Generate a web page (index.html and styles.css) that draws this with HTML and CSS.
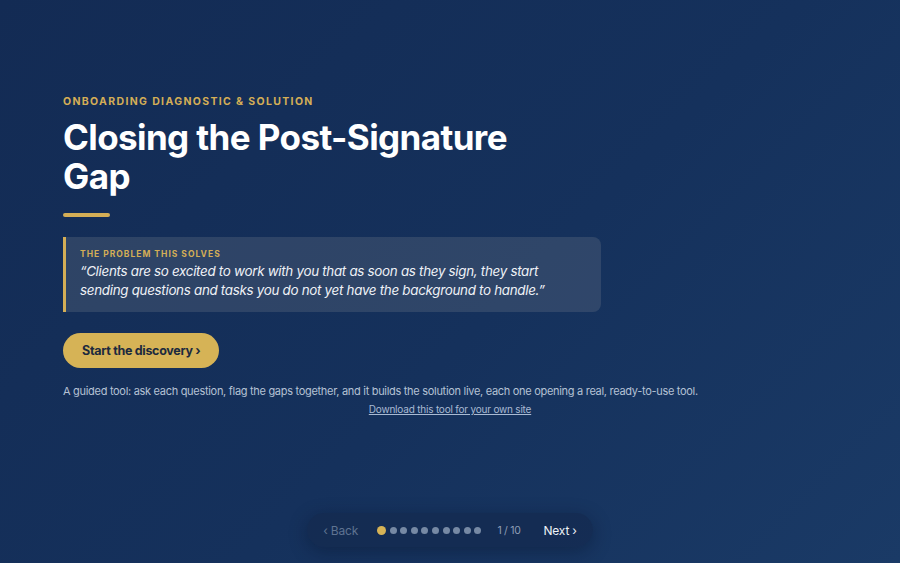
FILE: index.html
```html
<!DOCTYPE html>
<html lang="en">
<head>
<meta charset="utf-8">
<title>Closing the Post-Signature Gap</title>
<link rel="stylesheet" href="styles.css">
</head>
<body>
<main class="page">
  <section class="intro">
    <div class="eyebrow">ONBOARDING DIAGNOSTIC &amp; SOLUTION</div>
    <h1 class="title">Closing the Post-Signature Gap</h1>
    <div class="rule"></div>
    <div class="problem">
      <div class="problem-label">THE PROBLEM THIS SOLVES</div>
      <p class="problem-quote">“Clients are so excited to work with you that as soon as they sign, they start sending questions and tasks you do not yet have the background to handle.”</p>
    </div>
    <button class="start">Start the discovery ›</button>
    <p class="desc">A guided tool: ask each question, flag the gaps together, and it builds the solution live, each one opening a real, ready-to-use tool.</p>
    <div class="download"><a href="#">Download this tool for your own site</a></div>
  </section>
  <nav class="pager">
    <span class="back">‹ Back</span>
    <span class="dots">
      <i class="dot active"></i><i class="dot"></i><i class="dot"></i><i class="dot"></i><i class="dot"></i><i class="dot"></i><i class="dot"></i><i class="dot"></i><i class="dot"></i><i class="dot"></i>
    </span>
    <span class="count">1 / 10</span>
    <span class="next">Next ›</span>
  </nav>
</main>
</body>
</html>
```

FILE: styles.css
```css
* { box-sizing: border-box; }
html, body { margin: 0; height: 100%; }
body {
  background: linear-gradient(135deg, #132b54 0%, #15315c 55%, #1a3a66 100%);
  font-family: "Inter", "DejaVu Sans", sans-serif;
  color: #fff;
  overflow: hidden;
}
.page {
  height: 563px;
  display: flex;
  flex-direction: column;
  padding: 95px 63px 0 63px;
}
.intro { display: flex; flex-direction: column; align-items: flex-start; }
.eyebrow {
  color: #d4ae56;
  font-size: 10.5px;
  font-weight: 700;
  letter-spacing: 1.35px;
  line-height: 14px;
}
.title {
  margin: 9px 0 0 0;
  font-size: 35px;
  font-weight: 700;
  line-height: 39px;
  letter-spacing: -0.6px;
  width: 480px;
}
.rule {
  margin-top: 17px;
  width: 47px;
  height: 4px;
  border-radius: 2px;
  background: #d4ae56;
}
.problem {
  margin-top: 20px;
  width: 538px;
  padding: 11px 16px 12px 14px;
  background: rgba(110, 120, 135, 0.3);
  border-left: 3px solid #d4ae56;
  border-radius: 0 8px 8px 0;
}
.problem-label {
  color: #d4ae56;
  font-size: 8.5px;
  font-weight: 700;
  letter-spacing: 1px;
  line-height: 12px;
}
.problem-quote {
  margin: 2px 0 0 0;
  font-size: 13.4px;
  font-style: italic;
  line-height: 19px;
  color: #eef1f6;
  letter-spacing: -0.3px;
}
.start {
  margin-top: 21px;
  height: 35px;
  padding: 0 19px;
  border: none;
  border-radius: 18px;
  background: #d6b356;
  color: #1c2a3e;
  font-family: inherit;
  font-size: 12.5px;
  font-weight: 700;
  letter-spacing: -0.3px;
}
.desc {
  margin: 16px 0 0 0;
  font-size: 11px;
  line-height: 14px;
  color: #b4c1d4;
  letter-spacing: -0.3px;
}
.download {
  align-self: stretch;
  margin-top: 4px;
  text-align: center;
  font-size: 10px;
  line-height: 14px;
  letter-spacing: -0.2px;
}
.download a { color: #a9bad3; text-decoration: underline; }
.pager {
  margin: auto auto 16px auto;
  display: flex;
  align-items: center;
  height: 34px;
  padding: 0 16px;
  border-radius: 17px;
  background: rgba(20, 42, 78, 0.7);
  box-shadow: 0 4px 18px rgba(5, 15, 35, 0.35);
  font-size: 12px;
}
.back { color: #5f7391; margin-right: 19px; letter-spacing: -0.2px; }
.dots { display: flex; align-items: center; gap: 3.6px; }
.dot {
  display: block;
  width: 7px;
  height: 7px;
  border-radius: 50%;
  background: #7689a4;
}
.dot.active { width: 9px; height: 9px; background: #d6b356; }
.count { color: #8d9db5; margin-left: 16px; font-size: 10.5px; letter-spacing: -0.3px; }
.next { color: #eef2f7; margin-left: 23px; letter-spacing: -0.2px; }
```
